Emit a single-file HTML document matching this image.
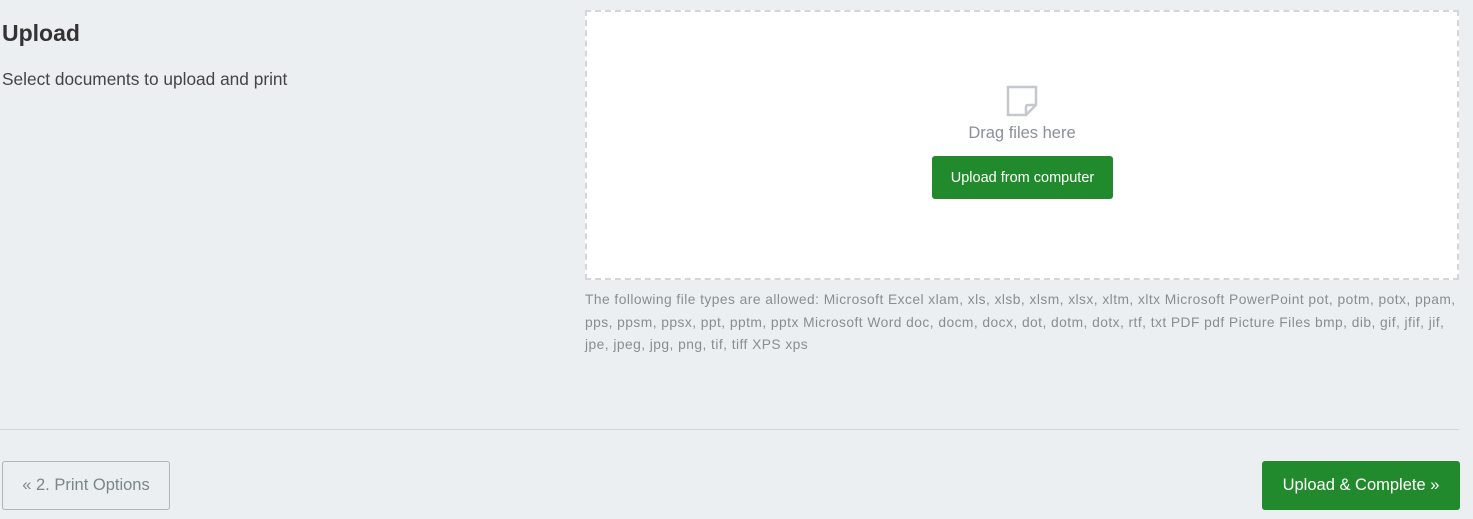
<!DOCTYPE html>
<html><head><style>
body{margin:0;width:1473px;height:519px;background:#eceff2;font-family:"Liberation Sans",sans-serif;position:relative;overflow:hidden}
.a{position:absolute}
h1{position:absolute;left:2px;top:20px;margin:0;font-size:23px;font-weight:bold;color:#333}
.sub{left:2px;top:69px;font-size:17.3px;color:#444}
.drop{left:585px;top:10px;width:870px;height:266px;background:#fff;border:2px dashed #d4d6d8}
.types{left:585px;top:289px;width:880px;font-size:13.8px;line-height:22.7px;color:#8a8d90;white-space:nowrap;letter-spacing:0.45px}
.btn{position:absolute;border-radius:3px;display:flex;align-items:center;justify-content:center;box-sizing:border-box}
.g{background:#218a2c;color:#fff}
</style></head><body>
<h1>Upload</h1>
<div class="a sub">Select documents to upload and print</div>
<div class="a drop"></div>
<svg class="a" style="left:1006px;top:85px" width="32" height="32" viewBox="0 0 32 32"><path d="M2 2H30V20L20 30H2Z M30 20H22Q20 20 20 22V30" fill="none" stroke="#c5c8cc" stroke-width="2.5"/></svg>
<div class="a" style="left:585px;width:874px;top:124px;text-align:center;font-size:16.5px;color:#8a9099">Drag files here</div>
<div class="btn g" style="left:932px;top:156px;width:181px;height:43px;font-size:14.5px">Upload from computer</div>
<div class="a types">The following file types are allowed: Microsoft Excel xlam, xls, xlsb, xlsm, xlsx, xltm, xltx Microsoft PowerPoint pot, potm, potx, ppam,<br>pps, ppsm, ppsx, ppt, pptm, pptx Microsoft Word doc, docm, docx, dot, dotm, dotx, rtf, txt PDF pdf Picture Files bmp, dib, gif, jfif, jif,<br>jpe, jpeg, jpg, png, tif, tiff XPS xps</div>
<div class="a" style="left:0;top:429px;width:1459px;height:1px;background:#d3d6d9"></div>
<div class="btn" style="left:2px;top:461px;width:168px;height:49px;border:1px solid #b0b5b8;color:#7b868b;font-size:16.5px">« 2. Print Options</div>
<div class="btn g" style="left:1262px;top:461px;width:198px;height:49px;font-size:16.5px">Upload &amp; Complete »</div>
</body></html>
